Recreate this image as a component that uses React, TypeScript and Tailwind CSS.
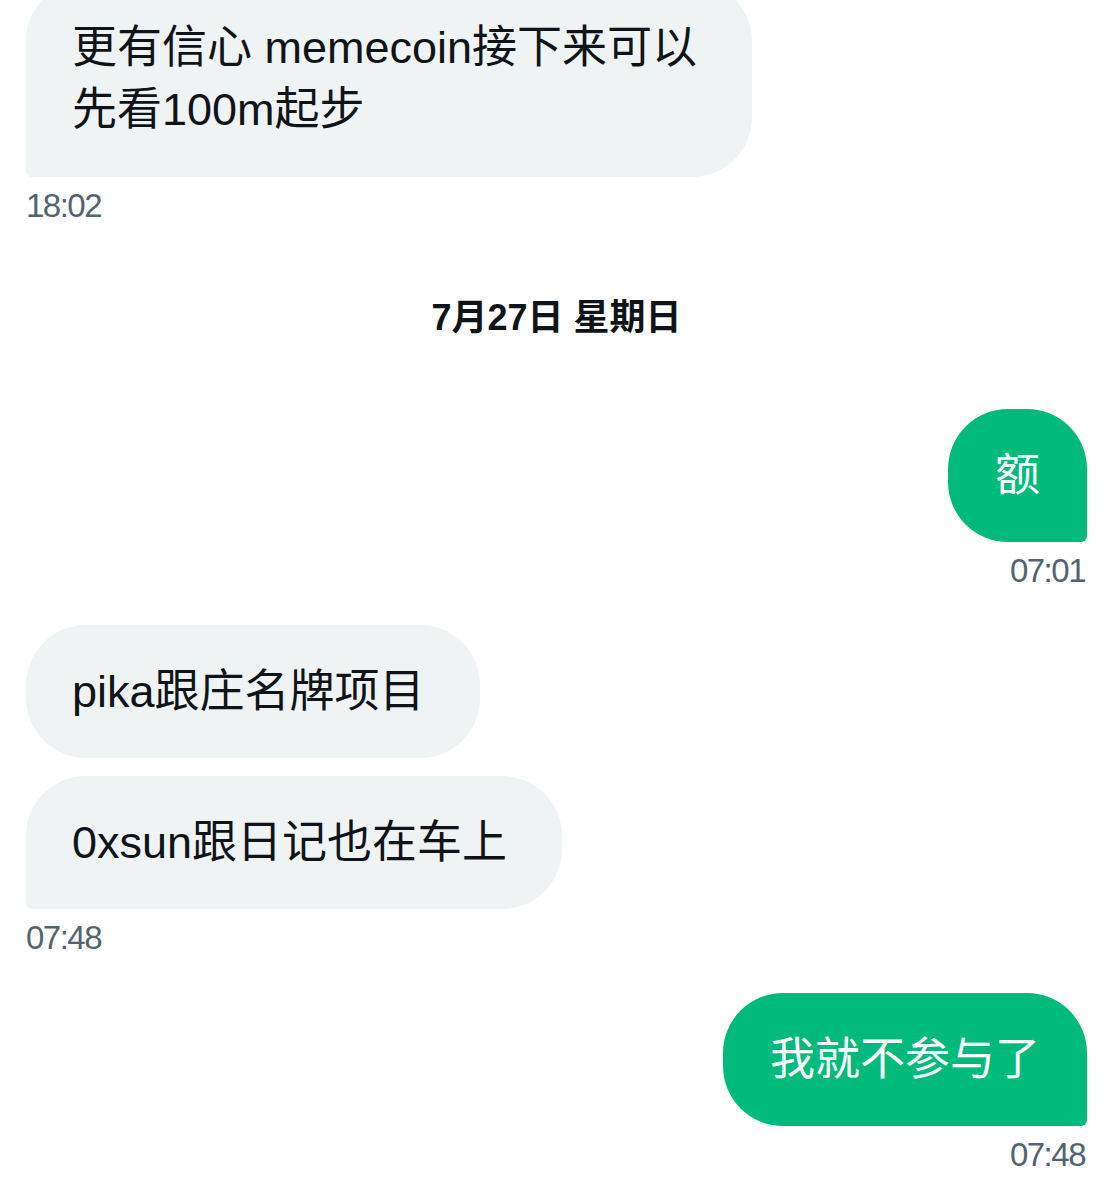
const font = { fontFamily: '"Liberation Sans", "Noto Sans CJK SC", sans-serif' };

function Stamp({ time, right }: { time: string; right?: boolean }) {
  return (
    <div
      className={`text-[33px] leading-[40px] tracking-[-1.5px] text-[#536471] ${right ? 'self-end mr-[2px]' : 'self-start'}`}
    >
      {time}
    </div>
  );
}

function Received({ children, last, className = '' }: { children: React.ReactNode; last?: boolean; className?: string }) {
  return (
    <div
      className={`self-start w-fit bg-[#eff3f4] text-[#0f1419] text-[45px] leading-[60px] pl-[46px] pr-[55px] py-[36px] rounded-[60px] ${last ? 'rounded-bl-[6px]' : ''} ${className}`}
    >
      {children}
    </div>
  );
}

function Sent({ children, className = '' }: { children: React.ReactNode; className?: string }) {
  return (
    <div
      className={`self-end w-fit bg-[#00ba7c] text-white text-[45px] leading-[61px] pl-[47px] pr-[47px] py-[36px] rounded-[60px] rounded-br-[6px] ${className}`}
    >
      {children}
    </div>
  );
}

export default function App() {
  return (
    <div className="w-[1113px] h-[1200px] overflow-hidden bg-white" style={font}>
      <div className="flex flex-col px-[26px]">
        {/* earlier message, top cut off */}
        <Received last className="-mt-[19px] leading-[62px]">
          更有信心 memecoin接下来可以
          <br />
          先看100m起步
        </Received>
        <div className="mt-[9px]">
          <Stamp time="18:02" />
        </div>

        {/* day separator */}
        <div className="mt-[67px] h-[50px] flex items-center justify-center text-[36px] font-bold text-[#0f1419]">
          7月27日 星期日
        </div>

        <Sent className="mt-[66px]">额</Sent>
        <div className="mt-[9px] flex flex-col">
          <Stamp time="07:01" right />
        </div>

        <Received className="mt-[34px] leading-[61px]">pika跟庄名牌项目</Received>
        <Received last className="mt-[18px] leading-[61px]">0xsun跟日记也在车上</Received>
        <div className="mt-[9px]">
          <Stamp time="07:48" />
        </div>

        <Sent className="mt-[35px]">我就不参与了</Sent>
        <div className="mt-[9px] flex flex-col">
          <Stamp time="07:48" right />
        </div>
      </div>
    </div>
  );
}
